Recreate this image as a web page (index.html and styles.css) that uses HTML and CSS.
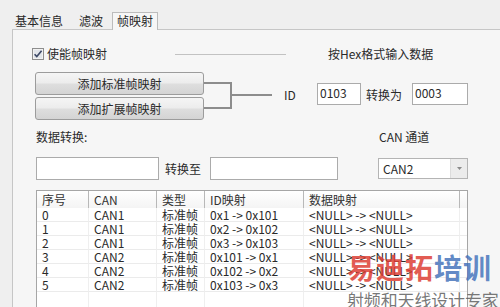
FILE: index.html
```html
<!DOCTYPE html>
<html lang="zh-CN">
<head>
    <meta charset="UTF-8">
    <title>帧映射</title>
    <link rel="stylesheet" href="styles.css">
</head>
<body>
    <div class="window">
        <div class="tabs">
            <span class="tab">基本信息</span>
            <span class="tab">滤波</span>
            <span class="tab active">帧映射</span>
        </div>
        <div class="panel">
            <div class="row top-row">
                <label class="check">
                    <svg class="check-box" width="12" height="12" viewBox="0 0 12 12">
                        <rect x="0.5" y="0.5" width="11" height="11" fill="#f2f2f2" stroke="#8e8e8e"/>
                        <rect x="2" y="2" width="8" height="8" fill="#e2e5ea"/>
                        <path d="M2.6 6.2l2.2 2.4L9.6 2.8" fill="none" stroke="#3c4866" stroke-width="1.6"/>
                    </svg>
                    使能帧映射
                </label>
                <span class="group-line"></span>
                <span class="hex-note">按Hex格式输入数据</span>
            </div>
            <div class="row map-row">
                <div class="btn-col">
                    <button class="btn">添加标准帧映射</button>
                    <button class="btn">添加扩展帧映射</button>
                </div>
                <svg class="bracket" width="68" height="48" viewBox="0 0 68 48">
                    <path d="M0 11H27V36H0M27 23H68" fill="none" stroke="#8d8d8d" stroke-width="2"/>
                </svg>
                <div class="id-group">
                    <span class="lbl-id">ID</span>
                    <input class="field f-id" type="text" value="0103">
                    <span class="to-label">转换为</span>
                    <input class="field f-to" type="text" value="0003">
                </div>
            </div>
            <div class="row label-row">
                <span class="data-label">数据转换:</span>
                <span>CAN 通道</span>
            </div>
            <div class="row data-row">
                <input class="field f-data" type="text">
                <span class="to-label2">转换至</span>
                <input class="field f-data2" type="text">
                <div class="combo">
                    <span class="combo-value">CAN2</span>
                    <span class="combo-btn">
                        <svg width="5" height="3" viewBox="0 0 5 3"><path d="M0 0H5L2.5 3Z" fill="#8a8a8a"/></svg>
                    </span>
                </div>
            </div>
            <table class="grid">
                <thead>
                    <tr>
                        <th class="c1">序号</th>
                        <th class="c2">CAN</th>
                        <th class="c3">类型</th>
                        <th class="c4">ID映射</th>
                        <th class="c5">数据映射</th>
                        <th class="c6"></th>
                    </tr>
                </thead>
                <tbody>
                    <tr><td>0</td><td>CAN1</td><td>标准帧</td><td>0x1 -&gt; 0x101</td><td>&lt;NULL&gt; -&gt; &lt;NULL&gt;</td><td></td></tr>
                    <tr><td>1</td><td>CAN1</td><td>标准帧</td><td>0x2 -&gt; 0x102</td><td>&lt;NULL&gt; -&gt; &lt;NULL&gt;</td><td></td></tr>
                    <tr><td>2</td><td>CAN1</td><td>标准帧</td><td>0x3 -&gt; 0x103</td><td>&lt;NULL&gt; -&gt; &lt;NULL&gt;</td><td></td></tr>
                    <tr><td>3</td><td>CAN2</td><td>标准帧</td><td>0x101 -&gt; 0x1</td><td>&lt;NULL&gt; -&gt; &lt;NULL&gt;</td><td></td></tr>
                    <tr><td>4</td><td>CAN2</td><td>标准帧</td><td>0x102 -&gt; 0x2</td><td>&lt;NULL&gt; -&gt; &lt;NULL&gt;</td><td></td></tr>
                    <tr><td>5</td><td>CAN2</td><td>标准帧</td><td>0x103 -&gt; 0x3</td><td>&lt;NULL&gt; -&gt; &lt;NULL&gt;</td><td></td></tr>
                    <tr class="filler"><td></td><td></td><td></td><td></td><td></td><td></td></tr>
                </tbody>
            </table>
        </div>
        <div class="watermark">
            <div class="wm-brand"><span class="wm-red">易迪拓</span><span class="wm-blue">培训</span></div>
            <div class="wm-sub">射频和天线设计专家</div>
        </div>
    </div>
</body>
</html>
```

FILE: styles.css
```css
body {
    margin: 0;
    background: #efefef;
    font-family: "Noto Sans CJK SC", sans-serif;
    font-size: 12px;
    color: #2a2a2a;
    overflow: hidden;
}
.window {
    position: relative;
    height: 307px;
}
.tabs {
    display: flex;
    align-items: flex-end;
    height: 29px;
    padding-left: 15px;
}
.tab {
    line-height: 16px;
}
.tab + .tab {
    margin-left: 16px;
}
.tab.active {
    position: relative;
    box-sizing: border-box;
    height: 18px;
    margin-left: 9px;
    margin-bottom: -1px;
    padding: 0 4px;
    border: 1px solid #bcbcbc;
    border-bottom: none;
    background: #f6f6f6;
}
.panel {
    height: 290px;
    margin-left: 12px;
    padding: 16px 0 0 23px;
    border-top: 1px solid #c6c6c6;
    border-left: 1px solid #c6c6c6;
    background: #f6f6f6;
}
.row {
    display: flex;
    align-items: center;
}
.top-row {
    height: 16px;
}
.check {
    display: flex;
    align-items: center;
    gap: 3px;
    width: 143px;
    margin-left: -4px;
    line-height: 16px;
}
.group-line {
    width: 111px;
    border-top: 1px solid #c2c2c2;
}
.hex-note {
    margin-left: 42px;
    line-height: 16px;
}
.map-row {
    height: 48px;
    margin-top: 10px;
}
.btn-col {
    display: flex;
    flex-direction: column;
    gap: 2px;
    margin-left: -1px;
}
.btn {
    width: 169px;
    height: 23px;
    padding: 0;
    border: 1px solid #9c9c9c;
    border-radius: 3px;
    background: linear-gradient(#f5f5f5 0%, #ececec 48%, #dedede 52%, #d4d4d4 100%);
    font: inherit;
    color: #2a2a2a;
}
.id-group {
    display: flex;
    align-items: center;
    margin-bottom: 4px;
}
.lbl-id {
    width: 33px;
    margin-left: 12px;
}
.field {
    box-sizing: border-box;
    padding: 0 2px 3px;
    border: 1px solid #ababab;
    background: #fff;
    font: inherit;
    color: #2a2a2a;
    outline: none;
}
.f-id {
    width: 44px;
    height: 22px;
}
.to-label {
    width: 36px;
    margin-left: 5px;
}
.f-to {
    width: 56px;
    height: 22px;
    margin-left: 10px;
}
.label-row {
    margin-top: 9px;
    line-height: 16px;
}
.data-label {
    width: 343px;
}
.data-row {
    align-items: flex-start;
    margin-top: 12px;
}
.f-data {
    width: 123px;
    height: 23px;
}
.to-label2 {
    width: 36px;
    margin-left: 6px;
    line-height: 23px;
}
.f-data2 {
    width: 128px;
    height: 23px;
    margin-left: 9px;
}
.combo {
    display: flex;
    box-sizing: border-box;
    width: 90px;
    height: 21px;
    margin: 1px 0 0 40px;
    border: 1px solid #b4b4b4;
    background: #fff;
}
.combo-value {
    flex: 1;
    padding-left: 4px;
    line-height: 19px;
}
.combo-btn {
    display: flex;
    align-items: center;
    justify-content: center;
    width: 16px;
    border-left: 1px solid #dcdcdc;
    background: #ececec;
}
.grid {
    width: 432px;
    margin-top: 10px;
    border: 1px solid #a6a6a6;
    border-spacing: 0;
    table-layout: fixed;
    background: #fff;
}
.grid th,
.grid td {
    box-sizing: border-box;
    padding: 0 0 0 5px;
    text-align: left;
    white-space: nowrap;
}
.grid th {
    height: 17px;
    line-height: 17px;
    font-weight: normal;
    color: #333;
    background: linear-gradient(#ffffff, #f4f4f4);
}
.grid th + th {
    border-left: 1px solid #b8b8b8;
}
.grid td {
    height: 14px;
    line-height: 13px;
    border-bottom: 1px solid #ebebeb;
}
.grid td + td {
    border-left: 1px solid #efefef;
}
.grid .filler td {
    height: 24px;
    border-bottom: none;
}
.c1 { width: 51px; }
.c2 { width: 68px; }
.c3 { width: 48px; }
.c4 { width: 99px; }
.c5 { width: 156px; }
.c6 { width: 8px; }
.watermark {
    position: absolute;
    left: 347px;
    top: 253px;
    pointer-events: none;
}
.wm-brand {
    font-size: 28px;
    line-height: 28px;
    font-weight: 700;
    letter-spacing: 1px;
    white-space: nowrap;
}
.wm-red {
    color: rgba(221, 62, 52, 0.85);
}
.wm-blue {
    color: rgba(64, 112, 186, 0.82);
}
.wm-sub {
    margin-top: 10px;
    font-size: 17px;
    line-height: 17px;
    letter-spacing: -0.15px;
    color: rgba(96, 96, 96, 0.85);
    white-space: nowrap;
}
```
